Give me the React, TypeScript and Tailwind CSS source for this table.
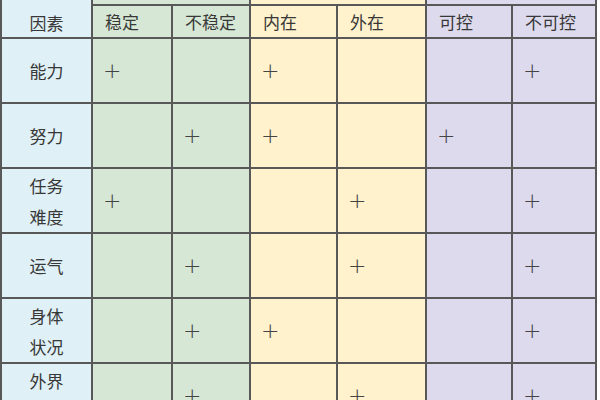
import React from "react";

const BLUE = "bg-[#dff0f6]";
const GREEN = "bg-[#d6e8d5]";
const YELLOW = "bg-[#fff2cd]";
const PURPLE = "bg-[#dedaee]";

const colColors = [GREEN, GREEN, YELLOW, YELLOW, PURPLE, PURPLE];
const headers = ["稳定", "不稳定", "内在", "外在", "可控", "不可控"];

const rows: { label: string[]; marks: boolean[]; spacer?: boolean }[] = [
  { label: ["能力"], marks: [true, false, true, false, false, true] },
  { label: ["努力"], marks: [false, true, true, false, true, false] },
  { label: ["任务", "难度"], marks: [true, false, false, true, false, true] },
  { label: ["运气"], marks: [false, true, false, true, false, true] },
  { label: ["身体", "状况"], marks: [false, true, true, false, false, true] },
  { label: ["外界"], marks: [false, true, false, true, false, true], spacer: true },
];

export default function App() {
  return (
    <div
      className="w-[600px] h-[400px] overflow-hidden bg-white text-[#383838]"
      style={{ fontFamily: '"Noto Sans CJK SC", "Noto Sans", sans-serif' }}
    >
      <div className="w-[597px] bg-[#585858] px-[2px] grid grid-cols-[89px_78px_76px_85px_87px_84px_82px] grid-rows-[4px_31px_63px_63px_63px_63px_63px_63px] gap-[2px]">
        <div className={`${BLUE} row-span-2 flex items-end justify-center pb-[6px] text-[17px] leading-none`}>
          因素
        </div>
        <div className={`${GREEN} col-span-2`} />
        <div className={`${YELLOW} col-span-2`} />
        <div className={`${PURPLE} col-span-2`} />
        {headers.map((h, i) => (
          <div key={h} className={`${colColors[i]} flex items-center pl-3 text-[17px] leading-none`}>
            {h}
          </div>
        ))}
        {rows.map((r) => (
          <React.Fragment key={r.label.join("")}>
            <div className={`${BLUE} flex flex-col items-center justify-center text-[17px] leading-[31px]`}>
              {r.label.map((l) => (
                <span key={l}>{l}</span>
              ))}
              {r.spacer && <div className="h-[31px]" />}
            </div>
            {r.marks.map((m, i) => (
              <div key={i} className={`${colColors[i]} flex items-center pl-[10px]`}>
                {m && (
                  <span
                    className="text-[22px] leading-none text-[#444] font-light"
                    style={{ fontFamily: '"DejaVu Sans", sans-serif' }}
                  >
                    +
                  </span>
                )}
              </div>
            ))}
          </React.Fragment>
        ))}
      </div>
    </div>
  );
}
